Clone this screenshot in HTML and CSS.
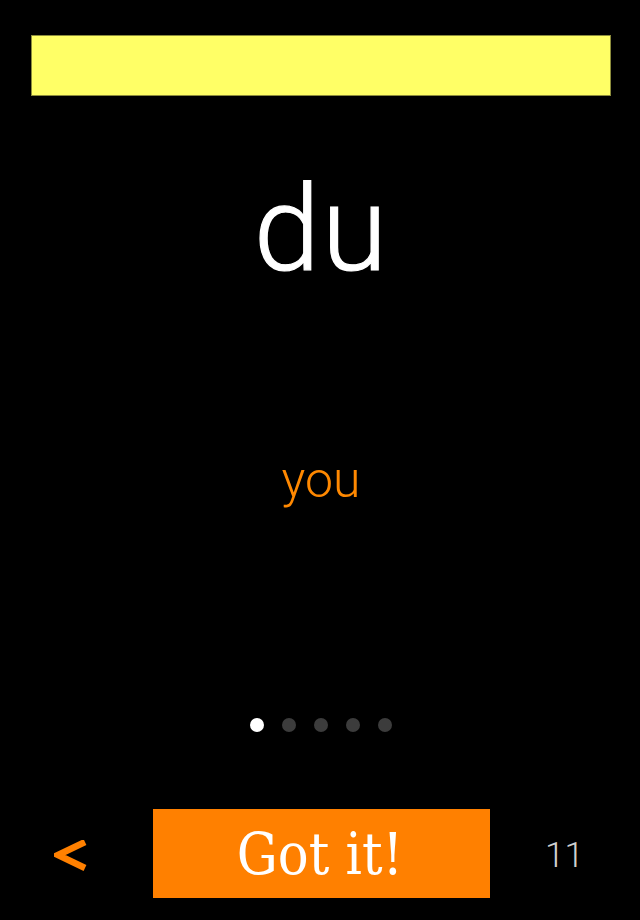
FILE: index.html
```html
<!DOCTYPE html>
<html>
<head>
<meta charset="utf-8">
<link rel="stylesheet" href="styles.css">
</head>
<body>
<div class="screen">
  <div class="banner"></div>
  <div class="word">du</div>
  <div class="translation">you</div>
  <div class="dots">
    <span class="dot active"></span>
    <span class="dot"></span>
    <span class="dot"></span>
    <span class="dot"></span>
    <span class="dot"></span>
  </div>
  <div class="footer">
    <div class="back">
      <svg width="34" height="34" viewBox="0 0 34 34"><polyline points="31,2 4,15 31,28" fill="none" stroke="#ff8000" stroke-width="6.5" stroke-linejoin="miter"/></svg>
    </div>
    <div class="gotit">Got it!</div>
    <div class="count">11</div>
  </div>
</div>
</body>
</html>
```
FILE: styles.css
```css
html, body {
  margin: 0;
  padding: 0;
  background: #000;
}
.screen {
  width: 640px;
  height: 920px;
  display: flex;
  flex-direction: column;
  background: #000;
  overflow: hidden;
}
.banner {
  margin: 35px 29px 0 31px;
  height: 59px;
  background: #ffff66;
  border: 1px solid #8c8c3c;
}
.word {
  margin-top: 64px;
  text-align: center;
  font-family: Roboto, "Liberation Sans", sans-serif;
  font-weight: 300;
  font-size: 119px;
  line-height: 140px;
  letter-spacing: 2px;
  color: #fff;
  padding-left: 3px;
  -webkit-text-stroke: 1.2px #fff;
}
.translation {
  margin-top: 150px;
  text-align: center;
  font-family: Roboto, "Liberation Sans", sans-serif;
  font-weight: 300;
  font-size: 50px;
  line-height: 60px;
  color: #ff8800;
  padding-left: 2px;
}
.dots {
  margin-top: 208px;
  display: flex;
  justify-content: center;
  gap: 18px;
  padding-left: 2px;
}
.dot {
  width: 14px;
  height: 14px;
  border-radius: 50%;
  background: #3c3c3c;
}
.dot.active {
  background: #fff;
}
.footer {
  margin-top: 77px;
  height: 89px;
  display: flex;
  align-items: center;
}
.back {
  width: 153px;
  display: flex;
  padding-left: 54px;
  box-sizing: border-box;
  padding-top: 6px;
}
.gotit {
  width: 337px;
  height: 89px;
  background: #ff8000;
  color: #fff;
  display: flex;
  align-items: center;
  justify-content: center;
  font-family: "DejaVu Serif Condensed", "DejaVu Serif", serif;
  font-size: 57px;
  font-weight: 400;
  padding-right: 3px;
  box-sizing: border-box;
}
.count {
  flex: 1;
  padding-left: 55px;
  font-family: Roboto, "Liberation Sans", sans-serif;
  font-weight: 300;
  font-size: 35px;
  color: #d0d0d0;
  padding-top: 4px;
}
```
